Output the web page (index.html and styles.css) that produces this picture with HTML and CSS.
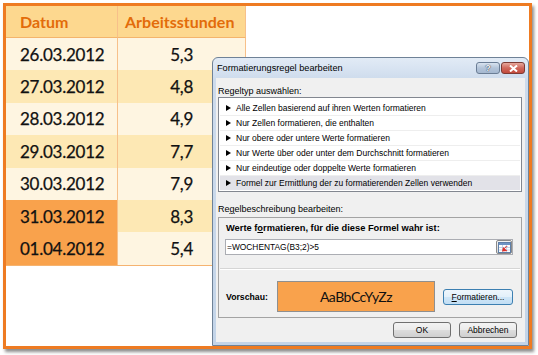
FILE: index.html
```html
<!DOCTYPE html>
<html lang="de">
<head>
<meta charset="UTF-8">
<title>Formatierungsregel bearbeiten</title>
<link rel="stylesheet" href="styles.css">
</head>
<body>
<div class="sheet">
    <div class="data">
        <div class="cell head">Datum</div>
        <div class="cell head hours">Arbeitsstunden</div>

        <div class="cell light">26.03.2012</div>
        <div class="cell light num">5,3</div>
        <div class="cell gold">27.03.2012</div>
        <div class="cell gold num">4,8</div>
        <div class="cell light">28.03.2012</div>
        <div class="cell light num">4,9</div>
        <div class="cell gold">29.03.2012</div>
        <div class="cell gold num">7,7</div>
        <div class="cell light">30.03.2012</div>
        <div class="cell light num">7,9</div>
        <div class="cell weekend">31.03.2012</div>
        <div class="cell gold num">8,3</div>
        <div class="cell weekend">01.04.2012</div>
        <div class="cell light num">5,4</div>
    </div>
</div>

<div class="dialog">
    <div class="titlebar">
        <span class="title">Formatierungsregel bearbeiten</span>
        <div class="caption-buttons">
            <div class="cap help">?</div>
            <div class="cap close">
                <svg width="9" height="7" viewBox="0 0 9 7"><path d="M1 0.5 L8 6.5 M8 0.5 L1 6.5" stroke="#fff" stroke-width="2"/></svg>
            </div>
        </div>
    </div>
    <div class="body">
        <div class="label">Regeltyp auswählen:</div>
        <div class="listbox">
            <div class="item"><span class="arrow"></span>Alle Zellen basierend auf ihren Werten formatieren</div>
            <div class="item"><span class="arrow"></span>Nur Zellen formatieren, die enthalten</div>
            <div class="item"><span class="arrow"></span>Nur obere oder untere Werte formatieren</div>
            <div class="item"><span class="arrow"></span>Nur Werte über oder unter dem Durchschnitt formatieren</div>
            <div class="item"><span class="arrow"></span>Nur eindeutige oder doppelte Werte formatieren</div>
            <div class="item sel"><span class="arrow"></span>Formel zur Ermittlung der zu formatierenden Zellen verwenden</div>
        </div>

        <div class="label section">Re<u>g</u>elbeschreibung bearbeiten:</div>
        <div class="descbox">
            <div class="desc-title">Werte f<u>o</u>rmatieren, für die diese Formel wahr ist:</div>
            <div class="formula">
                <span>=WOCHENTAG(B3;2)&gt;5</span>
                <div class="range-btn">
                    <svg width="13" height="11" viewBox="0 0 13 11">
                        <rect x="0.5" y="0.5" width="12" height="10" fill="#fff" stroke="#5f7fa8"/>
                        <rect x="1" y="1" width="11" height="2" fill="#6f94c4"/>
                        <path d="M1 5.5 H12 M1 8 H12 M4.5 3 V10 M8.5 3 V10" stroke="#b9cbe2" stroke-width="0.8"/>
                        <path d="M10 4 L6 7 L7.5 4.5 Z M5 5 L9.5 9 L4 9.5 Z" fill="#e0302a"/>
                    </svg>
                </div>
            </div>
            <div class="divider"></div>
            <div class="preview-row">
                <span class="preview-label">Vorschau:</span>
                <div class="preview">AaBbCcYyZz</div>
                <div class="btn focus"><u>F</u>ormatieren...</div>
            </div>
        </div>
        <div class="actions">
            <div class="btn">OK</div>
            <div class="btn">Abbrechen</div>
        </div>
    </div>
</div>
</body>
</html>
```

FILE: styles.css
```css
body {
    margin: 0;
    width: 538px;
    height: 355px;
    overflow: hidden;
    position: relative;
    background-color: #fff;
    font-family: "Liberation Sans", Arial, sans-serif;
    color: #000;
}

/* spreadsheet part */

.sheet {
    margin: 3px 0 0 3px;
    width: 529px;
    height: 346px;
    box-sizing: border-box;
    border: 3px solid #ee7b22;
    background-color: #fff;
    box-shadow: 2px 3px 3px rgba(0, 0, 0, 0.45);
}

.data {
    display: grid;
    grid-template-columns: 112px 128px;
    grid-template-rows: 32px repeat(7, 32.4px);
    width: 240px;
    font-family: Lato, "Open Sans", sans-serif;
    font-size: 17px;
    letter-spacing: -0.25px;
    color: #111;
    -webkit-text-stroke: 0.25px #111;
    border-bottom: 1px solid #f5b370;
}

.cell {
    box-sizing: border-box;
    display: flex;
    align-items: center;
    padding-left: 14px;
    border-right: 1px solid #f7c08a;
}

.head {
    background-color: #fdd88f;
    color: #e36c0a;
    -webkit-text-stroke: 0;
    font-weight: bold;
    font-size: 16px;
    letter-spacing: 0;
    border-bottom: 1px solid #f4b46c;
}

.head.hours {
    padding-left: 7px;
}

.num {
    justify-content: flex-end;
    padding-right: 52px;
}

.light {
    background-color: #fef5e1;
}

.gold {
    background-color: #fde8b4;
}

.weekend {
    background-color: #f9a24c;
}

/* dialog window */

.dialog {
    position: absolute;
    left: 212px;
    top: 57px;
    width: 317px;
    height: 289px;
    box-sizing: border-box;
    border: 1px solid #6f8297;
    border-radius: 6px 6px 0 0;
    padding: 0 3px 3px;
    background: linear-gradient(#e2ebf6, #cddbec 22px, #c3d4e8);
    display: flex;
    flex-direction: column;
}

.titlebar {
    height: 20px;
    display: flex;
    align-items: center;
    padding-left: 1px;
    font-size: 9.2px;
}

.caption-buttons {
    margin-left: auto;
    align-self: flex-start;
    margin-top: 4px;
    display: flex;
    gap: 1px;
}

.cap {
    width: 24px;
    height: 12px;
    box-sizing: border-box;
    border: 1px solid #6a7d95;
    border-radius: 3px;
    display: flex;
    align-items: center;
    justify-content: center;
}

.help {
    background: linear-gradient(#d9e3ef, #b3c4d9 50%, #a5b8d0);
    color: #f4f7fb;
    font-weight: bold;
    font-size: 9px;
    line-height: 10px;
    text-shadow: 0 0 1px #2c3a4d, 0 0 1px #2c3a4d;
}

.close {
    border-color: #7c3a34;
    background: linear-gradient(#e6a79c, #d0685c 50%, #c24a3c);
}

.body {
    flex: 1;
    background-color: #f0f0f0;
    padding: 8px 3px 0 2px;
    display: flex;
    flex-direction: column;
    font-size: 9px;
}

.label {
    line-height: 11px;
}

.label.section {
    margin-top: 12px;
}

.listbox {
    border: 1px solid #828790;
    background-color: #fff;
    padding: 2px 1px 1px;
}

.item {
    height: 15px;
    box-sizing: border-box;
    display: flex;
    align-items: center;
    padding-left: 6px;
    font-size: 8.5px;
    border-top: 1px solid #eeeeee;
}

.item:first-child {
    border-top: none;
}

.item.sel {
    background-color: #e2e2e8;
}

.arrow {
    width: 0;
    height: 0;
    border-top: 3px solid transparent;
    border-bottom: 3px solid transparent;
    border-left: 5px solid #000;
    margin-right: 5px;
}

.descbox {
    margin-top: 2px;
    border: 1px solid #a3a3a3;
    padding: 5px 8px 5px 7px;
    display: flex;
    flex-direction: column;
}

.desc-title {
    font-weight: bold;
    font-size: 9.3px;
    line-height: 11px;
}

.formula {
    margin: 5px 0 0 -1px;
    height: 16px;
    box-sizing: border-box;
    border: 1px solid #abadb3;
    background-color: #fff;
    padding-left: 1px;
    display: flex;
    align-items: center;
    font-size: 8.4px;
}

.range-btn {
    margin-left: auto;
    width: 16px;
    height: 14px;
    box-sizing: border-box;
    border: 1px solid #8a8a8a;
    border-radius: 2px;
    background: linear-gradient(#f4f4f4, #d8d8d8);
    display: flex;
    align-items: center;
    justify-content: center;
}

.divider {
    margin: 13px -7px 0 -6px;
    border-top: 1px solid #d5d5d5;
    border-bottom: 1px solid #fff;
}

.preview-row {
    margin-top: 11px;
    display: flex;
    align-items: center;
}

.preview-label {
    width: 51px;
    font-weight: bold;
    font-size: 8.7px;
}

.preview {
    width: 158px;
    height: 31px;
    box-sizing: border-box;
    border: 1px solid #8f8f8f;
    background-color: #f9a24c;
    display: flex;
    align-items: center;
    justify-content: center;
    font-family: Lato, "Open Sans", sans-serif;
    font-size: 14px;
    letter-spacing: -0.5px;
    color: #111;
    margin-right: 8px;
}

.btn {
    height: 16px;
    box-sizing: border-box;
    border: 1px solid #707070;
    border-radius: 3px;
    background: linear-gradient(#f3f3f3, #ebebeb 50%, #dddddd 50%, #cfcfcf);
    display: flex;
    align-items: center;
    justify-content: center;
    font-size: 8.5px;
    width: 58px;
}

.btn.focus {
    width: 70px;
    border-color: #3c7fb1;
    background: linear-gradient(#eef6fc, #e3f0fa 50%, #cfe6f7 50%, #c2def4);
}

.actions {
    margin: 4px 5px 0 0;
    display: flex;
    justify-content: flex-end;
    gap: 8px;
}
```
